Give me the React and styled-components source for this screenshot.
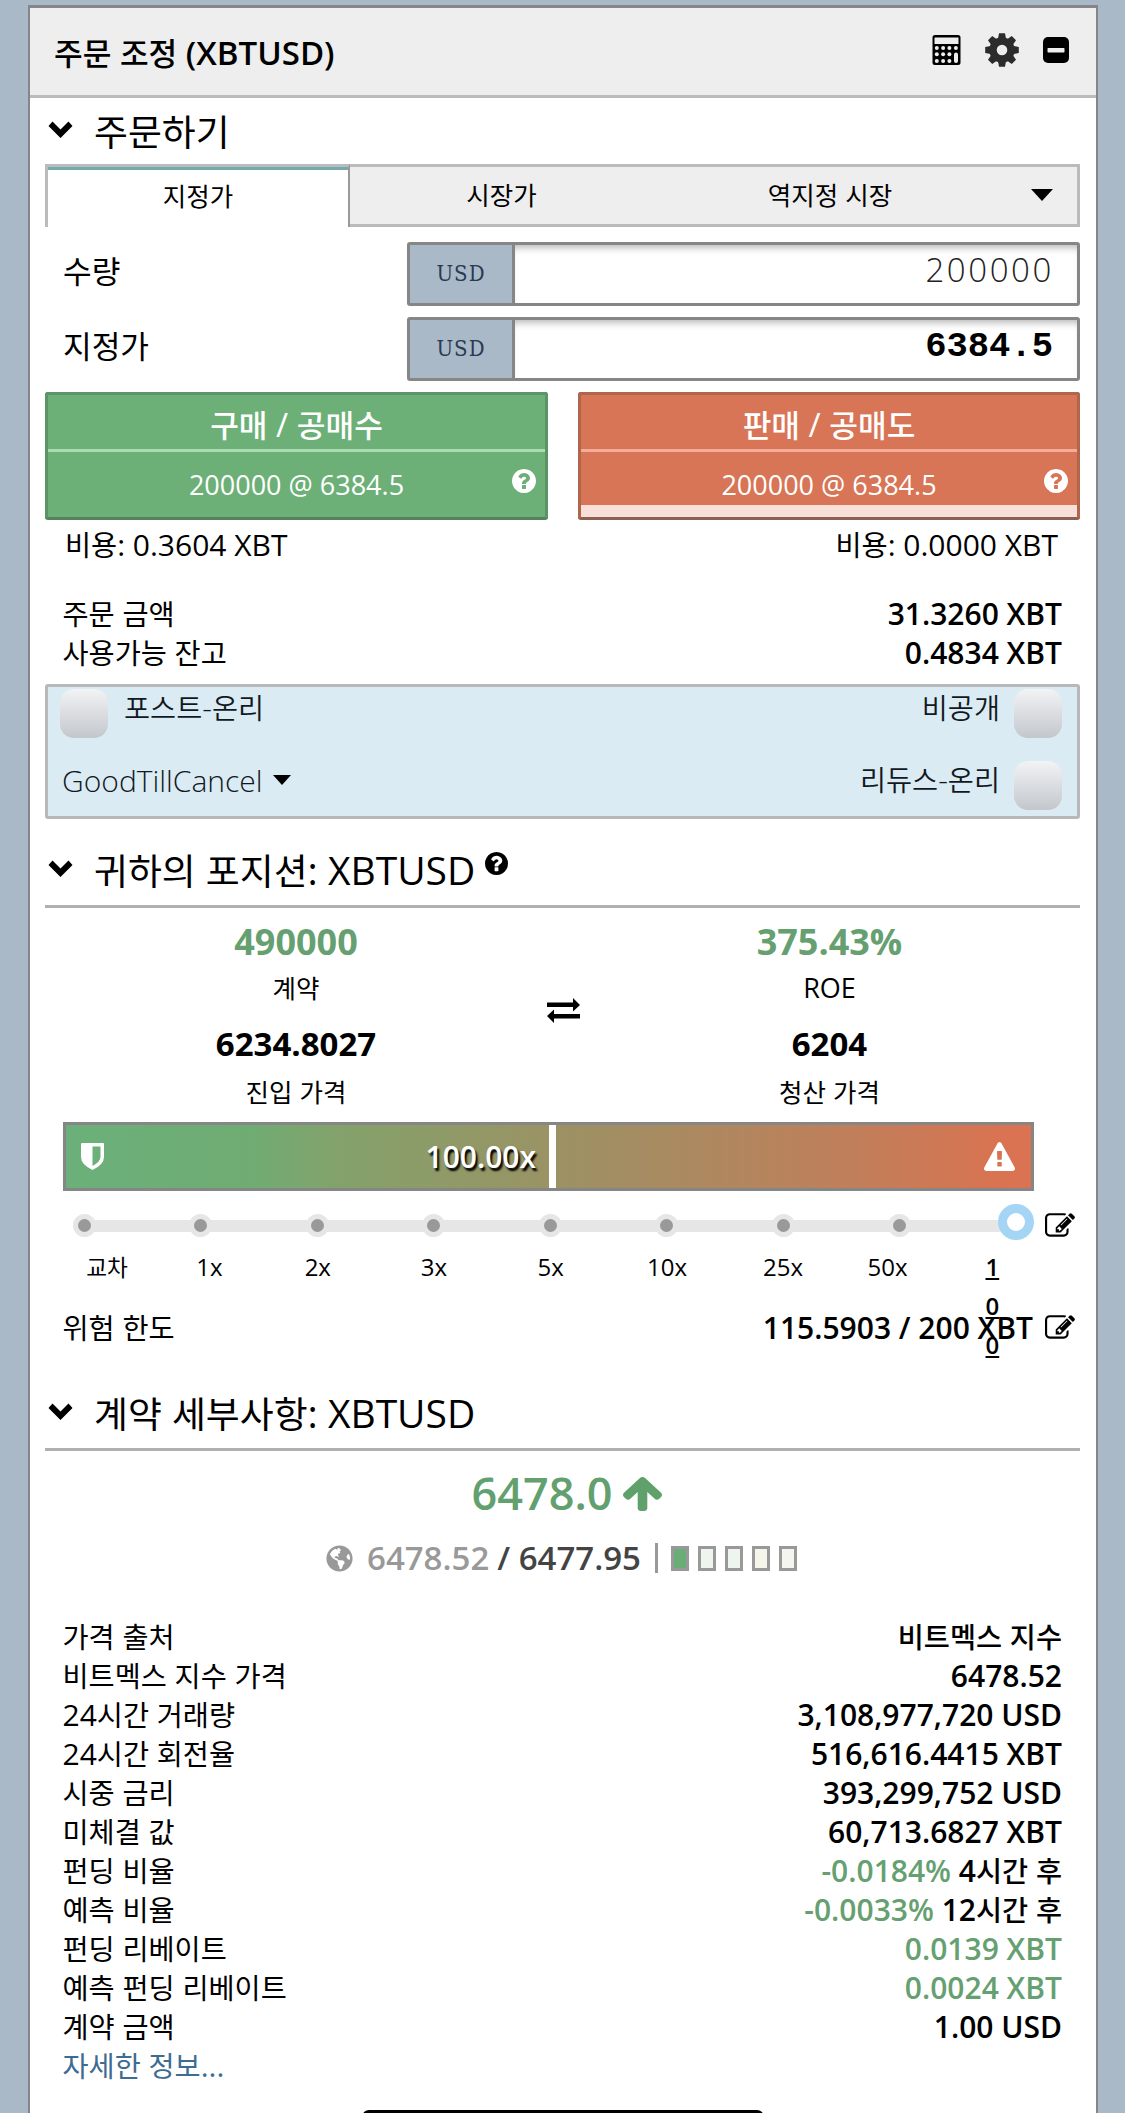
import React from "react";
import styled, { createGlobalStyle } from "styled-components";
import { FaGlobeAmericas } from "react-icons/fa";

const GlobalStyle = createGlobalStyle`
  * { box-sizing: border-box; }
  html, body { margin: 0; padding: 0; background: #a9b9c8; }
  body { font-family: "Open Sans", "Noto Sans CJK KR", sans-serif; color: #000; }
`;

const Page = styled.div`
  height: 2113px;
  overflow: hidden;
  padding: 5px 27px 0 28px;
  background: #a9b9c8;
`;

const Panel = styled.main`
  height: 2120px;
  background: #fff;
  border: 2px solid #86868a;
  border-top-width: 3px;
`;

const Hangul = styled.span`
  font-size: 0.945em;
  font-weight: ${(p) => p.$weight || "inherit"};
  line-height: 0;
`;

function Ko({ children, weight }) {
  return String(children)
    .split(/([\uAC00-\uD7A3]+)/)
    .map((part, i) => (i % 2 ? <Hangul key={i} $weight={weight}>{part}</Hangul> : part));
}

const Header = styled.header`
  height: 90px;
  padding: 1px 27px 0 24px;
  display: flex;
  align-items: center;
  justify-content: space-between;
  background: #eee;
  border-bottom: 3px solid #bbb;
`;

const Title = styled.h1`
  margin: 0;
  padding-top: 2px;
  font-size: 33px;
  line-height: 84px;
  font-weight: 600;
`;

const Tools = styled.div`
  display: flex;
  align-items: center;
  gap: 24px;
  padding-bottom: 5px;
`;

const Body = styled.div`
  padding: 0 16px 0 15px;
`;

const Heading = styled.h2`
  margin: ${(p) => p.$top || 0}px 0 0;
  height: ${(p) => (p.$ruled ? 73 : 66)}px;
  border-bottom: ${(p) => (p.$ruled ? "3px solid #b0b0b0" : "0")};
  padding-left: 3px;
  display: flex;
  align-items: center;
  font-size: 39px;
  line-height: 60px;
  font-weight: 400;
`;

const Chevron = styled.svg`
  width: 25px;
  height: 17px;
  margin: 0 21px 3px 0;
`;

const HeadingHelp = styled.span`
  display: flex;
  margin: 0 0 13px 10px;
`;

const Tabs = styled.nav`
  height: 63px;
  display: grid;
  grid-template-columns: 305px 303px 354px 1fr;
`;

const Tab = styled.div`
  padding-bottom: 2px;
  display: flex;
  align-items: center;
  justify-content: center;
  font-size: 27px;
  line-height: 40px;
  background: ${(p) => (p.$active ? "#fff" : "#eee")};
  border: 0 solid #bbb;
  border-top-width: 3px;
  border-bottom-width: ${(p) => (p.$active ? 0 : 3)}px;
  border-left-width: ${(p) => (p.$active ? 3 : 0)}px;
  border-right: ${(p) => (p.$active ? "2px solid #999" : p.$last ? "3px solid #bbb" : "0")};
  box-shadow: ${(p) => (p.$active ? "inset 0 3px 0 #75a9ae" : "none")};
`;

const Caret = styled.span`
  border: ${(p) => p.$w}px solid transparent;
  border-top: ${(p) => p.$h}px solid #000;
  border-bottom: 0;
`;

const Fields = styled.div`
  margin-top: 15px;
  display: grid;
  gap: 11px;
`;

const Field = styled.div`
  height: 64px;
  display: grid;
  grid-template-columns: 362px 106px 1fr;
`;

const FieldName = styled.label`
  padding-left: 18px;
  font-size: 33px;
  line-height: 57px;
`;

const Unit = styled.span`
  display: flex;
  align-items: center;
  justify-content: center;
  background: #a9b9c8;
  border: 3px solid #868686;
  border-right-width: 1px;
  border-radius: 3px 0 0 3px;
  color: #2b3a52;
  font: 22px/40px "DejaVu Serif Condensed", "DejaVu Serif", serif;
  letter-spacing: 1px;
`;

const Amount = styled.span`
  display: flex;
  align-items: center;
  justify-content: flex-end;
  padding: 0 ${(p) => (p.$bold ? "24px 5px" : "23px 10px")} 0;
  border: 3px solid #868686;
  border-left-width: 2px;
  border-radius: 0 3px 3px 0;
  box-shadow: inset 0 7px 7px -4px #bbb;
  color: ${(p) => (p.$bold ? "#000" : "#222")};
  font-family: ${(p) => (p.$bold ? '"Liberation Mono", monospace' : '"Open Sans", sans-serif')};
  font-size: ${(p) => (p.$bold ? 35.5 : 33)}px;
  font-weight: ${(p) => (p.$bold ? 700 : 300)};
  letter-spacing: ${(p) => (p.$bold ? 0 : 2.6)}px;
`;

const Actions = styled.div`
  margin-top: 11px;
  display: grid;
  grid-template-columns: 503px 1fr;
  gap: 30px;
`;

const Action = styled.div`
  height: 128px;
  display: flex;
  flex-direction: column;
  color: #fff;
  background: ${(p) => (p.$sell ? "#d87556" : "#6db077")};
  border: 3px solid ${(p) => (p.$sell ? "#b0664d" : "#5b9466")};
  border-bottom-color: ${(p) => (p.$sell ? "#8c6050" : "#56815d")};
  border-radius: 3px;
  box-shadow: ${(p) => (p.$sell ? "inset 0 -12px 0 #f8dfd7" : "none")};
`;

const ActionTitle = styled.div`
  height: 57px;
  padding-top: 4px;
  text-align: center;
  font-size: 33px;
  line-height: 52px;
  font-weight: 500;
  border-bottom: 3px solid ${(p) => (p.$sell ? "#f4ab98" : "#a9dcb1")};
`;

const ActionInfo = styled.div`
  flex: 1;
  display: grid;
  grid-template-columns: 33px 1fr 33px;
  align-items: center;
  text-align: center;
  font-size: 27px;
  line-height: 65px;
`;

const ActionHelp = styled.span`
  display: flex;
  padding-bottom: 7px;
`;

const Costs = styled.div`
  height: 49px;
  padding: 0 22px 0 20px;
  display: flex;
  justify-content: space-between;
  font-size: 30px;
  line-height: 49px;
`;

const Rows = styled.div`
  margin-top: ${(p) => p.$top}px;
  padding: 0 18px 0 17.5px;
`;

const Row = styled.div`
  height: 39px;
  display: flex;
  justify-content: space-between;
  font-size: 30px;
  line-height: 39px;
`;

const Value = styled.span`
  font-weight: 600;
  color: ${(p) => (p.$green ? "#66a071" : "#000")};
`;

const More = styled.a`
  color: #3d6c92;
`;

const Options = styled.div`
  margin-top: 12px;
  height: 135px;
  padding: 2px 15px 0 12px;
  background: #daebf3;
  border: 3px solid #b8b8b8;
  border-radius: 3px;
  color: #111822;
  font-size: 30px;
  font-weight: 300;
`;

const OptionRow = styled.div`
  height: 72px;
  display: flex;
  justify-content: space-between;
`;

const Option = styled.div`
  display: flex;
  gap: ${(p) => (p.$end ? 14 : 16)}px;
  line-height: 38px;
`;

const Check = styled.span`
  width: 48px;
  height: 49px;
  border-radius: 14px;
  background: linear-gradient(#f2f3f5, #c3c7cc);
`;

const Duration = styled.div`
  padding-left: 2px;
  display: flex;
  align-items: center;
  gap: 10px;
  height: 38px;
`;

const Position = styled.div`
  margin-top: 7px;
  display: grid;
  grid-template-columns: 502px 33px 499px;
  align-items: center;
  text-align: center;
`;

const Big = styled.div`
  padding-top: 2px;
  font-size: ${(p) => (p.$green ? 36 : 33)}px;
  line-height: ${(p) => (p.$green ? 50 : 68)}px;
  font-weight: 700;
  color: ${(p) => (p.$green ? "#66a071" : "#000")};
`;

const Caption = styled.div`
  font-size: 27px;
  line-height: ${(p) => (p.$tight ? 27 : 41)}px;
`;

const Risk = styled.div`
  margin: 17px 46px 0 18px;
  height: 69px;
  border: 3px solid #868686;
  padding: 0 15px 0 15px;
  display: grid;
  grid-template-columns: 24px 444px 7px 1fr 32px;
  align-items: center;
  background: linear-gradient(90deg, #6bb07a 0%, #6fac73 19%, #83a26b 28%, #989465 48%, #a68c62 60%, #be805b 80%, #d97351 97%);
`;

const Leverage = styled.span`
  padding-right: 13px;
  text-align: right;
  color: #fff;
  font-size: 30px;
  line-height: 60px;
  font-weight: 600;
  text-shadow: 2px 3px 2px #000;
`;

const Marker = styled.span`
  height: 63px;
  background: #fff;
`;

const SliderRow = styled.div`
  margin: 12px 5px 0 28px;
  height: 37px;
  display: flex;
  align-items: center;
  justify-content: space-between;
`;

const Track = styled.div`
  width: 961px;
  height: 36px;
  display: flex;
  align-items: center;
  background: linear-gradient(#e6e6e6, #e6e6e6) 11px 16px / 930px 12px no-repeat;
`;

const StopGap = styled.span`
  display: flex;
  width: 116.43px;
  flex: none;
  &:nth-last-child(2) {
    width: 110px;
  }
`;

const Stop = styled.span`
  width: 23px;
  height: 23px;
  margin: 8px 0 0;
  border-radius: 50%;
  border: 5.5px solid #e6e6e6;
  background: #999;
`;

const Handle = styled.span`
  flex: none;
  width: 36px;
  height: 36px;
  border-radius: 50%;
  border: 9px solid #a5d5f4;
  background: #fff;
`;

const SliderEdit = styled.span`
  display: flex;
  padding-top: 8px;
`;

const Labels = styled.div`
  margin: 7px 0 0 5px;
  height: 39px;
  display: grid;
  grid-template-columns: 114px 91px 125.6px 106.8px 126.6px 106px 126px 83px 127px;
  justify-items: center;
  font-size: 24px;
  line-height: 39px;
`;

const LastLabel = styled.span`
  width: 14px;
  word-break: break-all;
  font-weight: 600;
  text-decoration: underline;
`;

const Limit = styled.div`
  margin: 22px 5px 0 17.5px;
  height: 39px;
  display: flex;
  align-items: center;
  font-size: 30px;
  line-height: 39px;
`;

const LimitValue = styled.span`
  margin-left: auto;
  padding-right: 12px;
  font-weight: 600;
`;

const Price = styled.div`
  margin-top: 10px;
  height: 63px;
  padding-left: 9px;
  display: flex;
  align-items: center;
  justify-content: center;
  gap: 11px;
  color: #63a06f;
  font-size: 45px;
  line-height: 63px;
  font-weight: 600;
`;

const Index = styled.div`
  margin-top: 14px;
  height: 40px;
  padding-right: 2px;
  display: flex;
  align-items: center;
  justify-content: center;
  color: #999;
  font-size: 33px;
  line-height: 40px;
  font-weight: 600;
`;

const IndexText = styled.span`
  padding-left: 14px;
`;

const Mark = styled.span`
  color: #444;
  padding: 0 14px 0 8px;
`;

const Blocks = styled.span`
  height: 30px;
  padding-left: 13px;
  border-left: 3px solid #999;
  display: flex;
  align-items: center;
  gap: 9px;
`;

const Block = styled.span`
  width: 18px;
  height: 25px;
  border: 3px solid #999;
  background: ${(p) => p.$fill};
`;

const HomeBar = styled.div`
  position: fixed;
  left: 362px;
  top: 2110px;
  width: 402px;
  height: 14px;
  border-radius: 7px;
  background: #000;
`;

const Down = () => (
  <Chevron viewBox="0 0 25 17">
    <path d="M0.5 5 L4.5 0.5 L12.5 8.5 L20.5 0.5 L24.5 5 L12.5 17Z" />
  </Chevron>
);

const Help = ({ size, color }) => (
  <svg width={size} height={size} viewBox="0 0 1536 1536" fill={color}>
    <path d="M896 1248v-192q0-14-9-23t-23-9h-192q-14 0-23 9t-9 23v192q0 14 9 23t23 9h192q14 0 23-9t9-23zm256-672q0-88-55.5-163t-138.5-116-170-41q-243 0-371 213-15 24 8 42l132 100q7 6 19 6 16 0 25-12 53-68 86-92 34-24 86-24 48 0 85.5 26t37.5 59q0 38-20 61t-68 45q-63 28-115.5 86.5t-52.5 125.5v36q0 14 9 23t23 9h192q14 0 23-9t9-23q0-19 21.5-49.5t54.5-49.5q32-18 49-28.5t46-35 44.5-48 28-60.5 12.5-81zm384 192q0 209-103 385.5t-279.5 279.5-385.5 103-385.5-103-279.5-279.5-103-385.5 103-385.5 279.5-279.5 385.5-103 385.5 103 279.5 279.5 103 385.5z" />
  </svg>
);

const Edit = () => (
  <svg width="30" height="30" viewBox="0 0 1792 1792">
    <path d="M888 1184l116-116-152-152-116 116v56h96v96h56zm440-720q-16-16-33 1l-350 350q-17 17-1 33t33-1l350-350q17-17 1-33zm80 594v190q0 119-84.5 203.5t-203.5 84.5h-832q-119 0-203.5-84.5t-84.5-203.5v-832q0-119 84.5-203.5t203.5-84.5h832q63 0 117 25 15 7 18 23 3 17-9 29l-49 49q-14 14-32 8-23-6-45-6h-832q-66 0-113 47t-47 113v832q0 66 47 113t113 47h832q66 0 113-47t47-113v-126q0-13 9-22l64-64q15-15 35-7t20 29zm-96-738l288 288-672 672h-288v-288zm444 132l-92 92-288-288 92-92q28-28 68-28t68 28l152 152q28 28 28 68t-28 68z" />
  </svg>
);

const Calculator = () => (
  <svg width="29" height="30" viewBox="0 0 28 30">
    <rect width="28" height="30" rx="2.5" />
    <rect x="2" y="2.5" width="24" height="6.5" rx="0.5" fill="#eee" />
    <g fill="#eee">
      {[4.3, 10.6, 16.9, 23.4].map((x) => <circle key={x} cx={x} cy="13" r="2" />)}
      {[4.3, 10.6, 16.9].map((x) => <circle key={x} cx={x} cy="19.3" r="2" />)}
      {[4.3, 10.6, 16.9].map((x) => <circle key={x} cx={x} cy="26" r="2" />)}
      <rect x="21.5" y="17.5" width="4" height="10.5" rx="2" />
    </g>
  </svg>
);

const Gear = () => (
  <svg width="34" height="34" viewBox="-17 -17 34 34">
    <g fill="#2c2c2c">
      {[0, 45, 90, 135, 180, 225, 270, 315].map((a) => (
        <path key={a} transform={`rotate(${a})`} d="M-4.2 -10 L-3 -16.8 H3 L4.2 -10Z" />
      ))}
    </g>
    <circle r="9" fill="none" stroke="#2c2c2c" strokeWidth="7.4" />
  </svg>
);

const Minus = () => (
  <svg width="26" height="26" viewBox="0 0 26 26">
    <rect width="26" height="26" rx="5" />
    <rect x="4.5" y="11" width="17" height="4.5" rx="0.8" fill="#eee" />
  </svg>
);

const Swap = () => (
  <svg width="33" height="25" viewBox="0 0 33 25">
    <path d="M0 4.5H26V0L33 7L26 13.5V9H0ZM33 16H7V11.5L0 18L7 25V20.5H33Z" />
  </svg>
);

const Shield = () => (
  <svg width="23" height="27" viewBox="0 0 23 27" fill="#fff">
    <path
      fillRule="evenodd"
      d="M1 0H22Q23 0 23 1V14Q23 21.500 11.500 27Q0 21.500 0 14V1Q0 0 1 0ZM11.500 3.500V23Q19.500 18.500 19.500 14V3.500Z"
    />
  </svg>
);

const Warning = () => (
  <svg width="31" height="29" viewBox="0 0 1792 1664" fill="#fff">
    <path d="M1024 1375v-190q0-14-9.500-23.500t-22.500-9.500h-192q-13 0-22.500 9.500t-9.500 23.500v190q0 14 9.500 23.500t22.500 9.500h192q13 0 22.500-9.500t9.500-23.500zm-2-374l18-459q0-12-10-19-13-11-24-11h-220q-11 0-24 11-10 7-10 21l17 457q0 10 10 16.500t24 6.500h185q14 0 23.500-6.500t10.500-16.500zm-14-934l768 1408q35 63-2 126-17 29-46.500 46t-63.500 17h-1536q-34 0-63.500-17t-46.500-46q-37-63-2-126l768-1408q17-31 47-49t65-18 65 18 47 49z" />
  </svg>
);

const ArrowUp = () => (
  <svg width="39" height="37" viewBox="117 64 1558 1600" preserveAspectRatio="none" fill="#5fa06b">
    <path d="M1675 971q0 51-37 90l-75 75q-38 38-91 38-54 0-90-38l-294-293v704q0 52-37.500 84.500t-90.500 32.500h-128q-53 0-90.500-32.500t-37.500-84.500v-704l-294 293q-36 38-90 38t-90-38l-75-75q-38-38-38-90 0-53 38-91l651-651q35-37 90-37 54 0 91 37l651 651q37 39 37 91z" />
  </svg>
);

const details = [
  ["가격 출처", "", "비트멕스 지수"],
  ["비트멕스 지수 가격", "", "6478.52"],
  ["24시간 거래량", "", "3,108,977,720 USD"],
  ["24시간 회전율", "", "516,616.4415 XBT"],
  ["시중 금리", "", "393,299,752 USD"],
  ["미체결 값", "", "60,713.6827 XBT"],
  ["펀딩 비율", "-0.0184%", " 4시간 후"],
  ["예측 비율", "-0.0033%", " 12시간 후"],
  ["펀딩 리베이트", "0.0139 XBT", ""],
  ["예측 펀딩 리베이트", "0.0024 XBT", ""],
  ["계약 금액", "", "1.00 USD"],
];

const stops = ["교차", "1x", "2x", "3x", "5x", "10x", "25x", "50x"];

export default function App() {
  return (
    <Page>
      <GlobalStyle />
      <Panel>
        <Header>
          <Title><Ko weight={500}>주문 조정 (XBTUSD)</Ko></Title>
          <Tools><Calculator /><Gear /><Minus /></Tools>
        </Header>
        <Body>
          <Heading><Down /><span><Ko>주문하기</Ko></span></Heading>
          <Tabs>
            <Tab $active><span><Ko>지정가</Ko></span></Tab>
            <Tab><span><Ko>시장가</Ko></span></Tab>
            <Tab><span><Ko>역지정 시장</Ko></span></Tab>
            <Tab $last><Caret $w={11} $h={12} /></Tab>
          </Tabs>
          <Fields>
            <Field>
              <FieldName><Ko>수량</Ko></FieldName>
              <Unit>USD</Unit>
              <Amount>200000</Amount>
            </Field>
            <Field>
              <FieldName><Ko>지정가</Ko></FieldName>
              <Unit>USD</Unit>
              <Amount $bold>6384.5</Amount>
            </Field>
          </Fields>
          <Actions>
            <Action>
              <ActionTitle><Ko>구매 / 공매수</Ko></ActionTitle>
              <ActionInfo><i /><span>200000 @ 6384.5</span><ActionHelp><Help size={24} color="#fff" /></ActionHelp></ActionInfo>
            </Action>
            <Action $sell>
              <ActionTitle $sell><Ko>판매 / 공매도</Ko></ActionTitle>
              <ActionInfo><i /><span>200000 @ 6384.5</span><ActionHelp><Help size={24} color="#fff" /></ActionHelp></ActionInfo>
            </Action>
          </Actions>
          <Costs>
            <span><Ko>비용: 0.3604 XBT</Ko></span>
            <span><Ko>비용: 0.0000 XBT</Ko></span>
          </Costs>
          <Rows $top={25}>
            <Row><span><Ko>주문 금액</Ko></span><Value>31.3260 XBT</Value></Row>
            <Row><span><Ko>사용가능 잔고</Ko></span><Value>0.4834 XBT</Value></Row>
          </Rows>
          <Options>
            <OptionRow>
              <Option><Check /><span><Ko weight={350}>포스트-온리</Ko></span></Option>
              <Option $end><span><Ko weight={350}>비공개</Ko></span><Check /></Option>
            </OptionRow>
            <OptionRow>
              <Duration>GoodTillCancel<Caret $w={9} $h={10} /></Duration>
              <Option $end><span><Ko weight={350}>리듀스-온리</Ko></span><Check /></Option>
            </OptionRow>
          </Options>
          <Heading $ruled $top={16}>
            <Down /><span><Ko>귀하의 포지션: XBTUSD</Ko></span>
            <HeadingHelp><Help size={23} color="#000" /></HeadingHelp>
          </Heading>
          <Position>
            <div>
              <Big $green>490000</Big>
              <Caption><Ko>계약</Ko></Caption>
              <Big>6234.8027</Big>
              <Caption $tight><Ko>진입 가격</Ko></Caption>
            </div>
            <Swap />
            <div>
              <Big $green>375.43%</Big>
              <Caption>ROE</Caption>
              <Big>6204</Big>
              <Caption $tight><Ko>청산 가격</Ko></Caption>
            </div>
          </Position>
          <Risk><Shield /><Leverage>100.00x</Leverage><Marker /><span /><Warning /></Risk>
          <SliderRow>
            <Track>
              {stops.map((s) => <StopGap key={s}><Stop /></StopGap>)}
              <Handle />
            </Track>
            <SliderEdit><Edit /></SliderEdit>
          </SliderRow>
          <Labels>
            {stops.map((s) => <span key={s}><Ko>{s}</Ko></span>)}
            <LastLabel>100</LastLabel>
          </Labels>
          <Limit>
            <span><Ko>위험 한도</Ko></span>
            <LimitValue>115.5903 / 200 XBT</LimitValue>
            <Edit />
          </Limit>
          <Heading $ruled $top={31}><Down /><span><Ko>계약 세부사항: XBTUSD</Ko></span></Heading>
          <Price>6478.0<ArrowUp /></Price>
          <Index>
            <FaGlobeAmericas size={27} />
            <IndexText>6478.52</IndexText>
            <Mark>/ 6477.95</Mark>
            <Blocks>
              {["#6bad76", "#eef5ee", "#eef5ee", "#f5f5ea", "#f4f5ee"].map((c, i) => <Block key={i} $fill={c} />)}
            </Blocks>
          </Index>
          <Rows $top={39}>
            {details.map(([name, green, value]) => (
              <Row key={name}>
                <span><Ko>{name}</Ko></span>
                <span>
                  {green && <Value $green>{green}</Value>}
                  {value && <Value><Ko weight={500}>{value}</Ko></Value>}
                </span>
              </Row>
            ))}
            <Row><More><Ko>자세한 정보...</Ko></More></Row>
          </Rows>
        </Body>
      </Panel>
      <HomeBar />
    </Page>
  );
}
